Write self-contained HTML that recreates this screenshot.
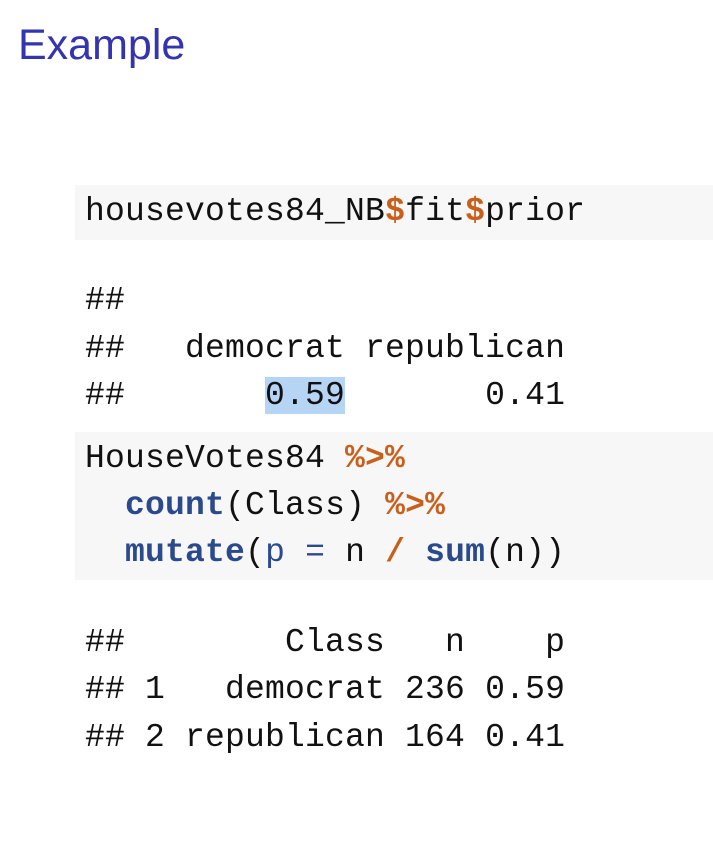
<!DOCTYPE html>
<html><head><meta charset="utf-8"><style>
body{margin:0;width:713px;height:858px;background:#fff;position:relative;overflow:hidden}
.t{position:absolute;left:18px;top:21px;font:43px "Liberation Sans",sans-serif;color:#3434b0}
.bg{position:absolute;left:75px;right:0;background:#f7f7f7}
.l{position:absolute;left:85px;height:47px;line-height:47px;font:33px/47px "Liberation Mono",monospace;letter-spacing:0.2px;white-space:pre;color:#111}
.o{color:#c8601c;font-weight:bold}
.b{color:#2b4a8c;font-weight:bold}
.p{color:#2b4a8c}
.h{background:#b6d5f5}
</style></head><body>
<div class="t">Example</div>
<div class="bg" style="top:185px;height:55px"></div>
<div class="bg" style="top:432px;height:148px"></div>
<div class="l" style="top:188px">housevotes84_NB<span class="o">$</span>fit<span class="o">$</span>prior</div>
<div class="l" style="top:277px">##</div>
<div class="l" style="top:325px">##   democrat republican</div>
<div class="l" style="top:372px">##       <span class="h">0.59</span>       0.41</div>
<div class="l" style="top:435px">HouseVotes84 <span class="o">%&gt;%</span></div>
<div class="l" style="top:482px">  <span class="b">count</span>(Class) <span class="o">%&gt;%</span></div>
<div class="l" style="top:529px">  <span class="b">mutate</span>(<span class="p">p =</span> n <span class="o">/</span> <span class="b">sum</span>(n))</div>
<div class="l" style="top:619px">##        Class   n    p</div>
<div class="l" style="top:666px">## 1   democrat 236 0.59</div>
<div class="l" style="top:714px">## 2 republican 164 0.41</div>
</body></html>
